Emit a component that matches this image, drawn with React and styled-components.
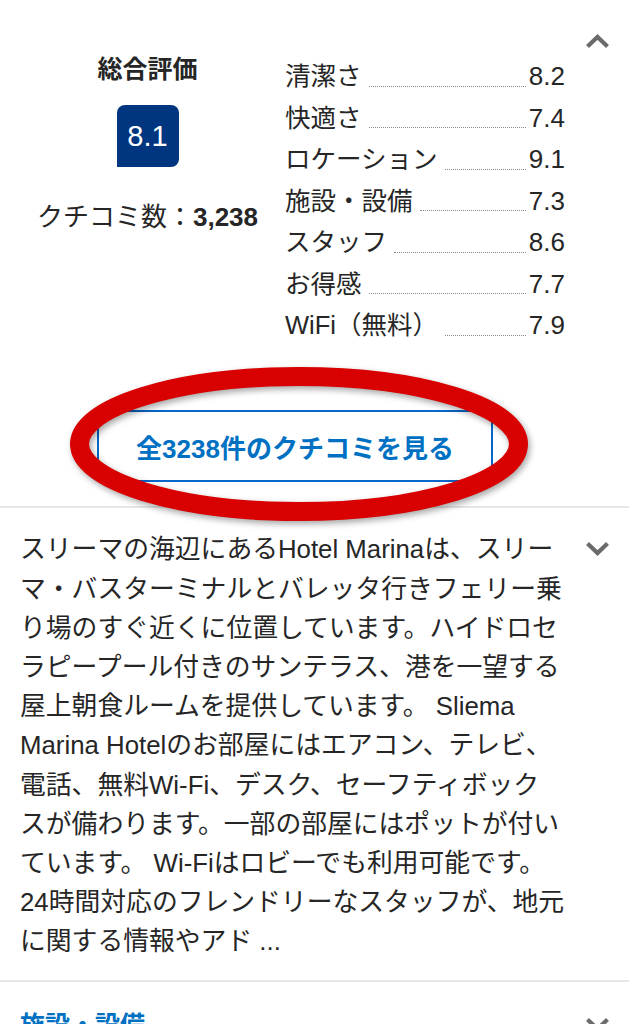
import React from "react";
import styled, { createGlobalStyle } from "styled-components";

const GlobalStyle = createGlobalStyle`
  body {
    margin: 0;
    background: #fff;
    font-family: "Liberation Sans", "Noto Sans CJK JP", sans-serif;
    color: #262626;
  }
`;

const scores = [
  { label: "清潔さ", value: "8.2" },
  { label: "快適さ", value: "7.4" },
  { label: "ロケーション", value: "9.1" },
  { label: "施設・設備", value: "7.3" },
  { label: "スタッフ", value: "8.6" },
  { label: "お得感", value: "7.7" },
  { label: "WiFi（無料）", value: "7.9" }
];

const descriptionLines = [
  "スリーマの海辺にあるHotel Marinaは、スリー",
  "マ・バスターミナルとバレッタ行きフェリー乗",
  "り場のすぐ近くに位置しています。ハイドロセ",
  "ラピープール付きのサンテラス、港を一望する",
  "屋上朝食ルームを提供しています。 Sliema",
  "Marina Hotelのお部屋にはエアコン、テレビ、",
  "電話、無料Wi-Fi、デスク、セーフティボック",
  "スが備わります。一部の部屋にはポットが付い",
  "ています。 Wi-Fiはロビーでも利用可能です。",
  "24時間対応のフレンドリーなスタッフが、地元",
  "に関する情報やアド ..."
];

function Chevron({ up }) {
  return (
    <ChevronIcon width="25" height="15" viewBox="0 0 25 15" $top={up ? 6 : 11}>
      <polyline
        points={up ? "2.5,12.5 12.5,3 22.5,12.5" : "2.5,2.5 12.5,12 22.5,2.5"}
        fill="none"
        stroke="#6b6b6b"
        strokeWidth="4.2"
      />
    </ChevronIcon>
  );
}

export default function App() {
  return (
    <Page>
      <GlobalStyle />
      {/* review summary */}
      <RatingSection>
        <Summary>
          <SummaryTitle>総合評価</SummaryTitle>
          <ScoreBadge>8.1</ScoreBadge>
          <ReviewCount>
            クチコミ数：<strong>3,238</strong>
          </ReviewCount>
        </Summary>
        <ScoreList>
          {scores.map(item => (
            <ScoreRow key={item.label}>
              <ScoreLabel>{item.label}</ScoreLabel>
              <Leader />
              <ScoreValue>{item.value}</ScoreValue>
            </ScoreRow>
          ))}
        </ScoreList>
        <Chevron up />
      </RatingSection>
      <ButtonRow>
        <ReviewButton type="button">全3238件のクチコミを見る</ReviewButton>
      </ButtonRow>
      <Divider />
      {/* hotel description */}
      <Collapsible>
        <Description>
          {descriptionLines.map((line, index) => (
            <span key={index}>
              {line}
              <br />
            </span>
          ))}
        </Description>
        <Chevron />
      </Collapsible>
      <Divider />
      <Collapsible $pad={24}>
        <SectionTitle>施設・設備</SectionTitle>
        <Chevron />
      </Collapsible>
      {/* red annotation ring */}
      <Annotation width="480" height="180" viewBox="0 0 480 180">
        <ellipse
          cx="239"
          cy="87"
          rx="219.5"
          ry="67.5"
          fill="none"
          stroke="#d80000"
          strokeWidth="19"
        />
      </Annotation>
    </Page>
  );
}

const Page = styled.div`
  position: relative;
  width: 629px;
  height: 1024px;
  overflow: hidden;
  background: #fff;
`;

const RatingSection = styled.div`
  display: flex;
  align-items: flex-start;
  padding: 28px 19px 0 20px;
`;

const Summary = styled.div`
  width: 255px;
  display: flex;
  flex-direction: column;
  align-items: center;
  padding-top: 22px;
`;

const SummaryTitle = styled.div`
  font-family: "Noto Sans CJK JP", sans-serif;
  font-size: 25px;
  line-height: 34px;
  font-weight: 700;
`;

const ScoreBadge = styled.div`
  margin-top: 21px;
  width: 62px;
  height: 62px;
  display: flex;
  align-items: center;
  justify-content: center;
  background: #003580;
  color: #fff;
  font-size: 29px;
  border-radius: 8px 8px 8px 0;
`;

const ReviewCount = styled.div`
  margin-top: 33px;
  font-size: 26px;
  line-height: 34px;
  white-space: nowrap;
  strong {
    font-weight: 700;
  }
`;

const ScoreList = styled.div`
  width: 280px;
  margin-left: 10px;
  padding-top: 28px;
`;

const ScoreRow = styled.div`
  display: flex;
  height: 41.5px;
  line-height: 41.5px;
  font-size: 25.5px;
`;

const ScoreLabel = styled.span`
  white-space: nowrap;
`;

const Leader = styled.span`
  flex: 1;
  align-self: flex-end;
  height: 0;
  margin: 0 3px 11px 7px;
  border-bottom: 1px dotted #8a8a8a;
`;

const ScoreValue = styled.span`
  font-size: 26px;
`;

const ChevronIcon = styled.svg`
  flex: none;
  margin-left: auto;
  margin-top: ${props => props.$top}px;
`;

const ButtonRow = styled.div`
  display: flex;
  justify-content: center;
  width: 550px;
  padding: 63.5px 0 24px 20px;
`;

const ReviewButton = styled.button`
  width: 396px;
  height: 72px;
  background: #fff;
  border: 2px solid #0a66c8;
  color: #0071c2;
  font-family: "Liberation Sans", "Noto Sans CJK JP", sans-serif;
  font-size: 26px;
  font-weight: 600;
  padding: 0;
`;

const Divider = styled.div`
  height: 2px;
  background: #e6e6e6;
`;

const Collapsible = styled.div`
  display: flex;
  align-items: flex-start;
  padding: ${props => props.$pad || 22.4}px 19px 18.5px 20px;
`;

const Description = styled.p`
  margin: 0;
  font-size: 25.8px;
  line-height: 39.2px;
  white-space: nowrap;
  color: #262626;
`;

const SectionTitle = styled.div`
  font-family: "Noto Sans CJK JP", sans-serif;
  font-size: 25px;
  line-height: 34px;
  font-weight: 700;
  color: #0071c2;
`;

const Annotation = styled.svg`
  position: absolute;
  left: 60px;
  top: 357px;
  pointer-events: none;
  filter: drop-shadow(2px 3px 3px rgba(0, 0, 0, 0.35));
`;
